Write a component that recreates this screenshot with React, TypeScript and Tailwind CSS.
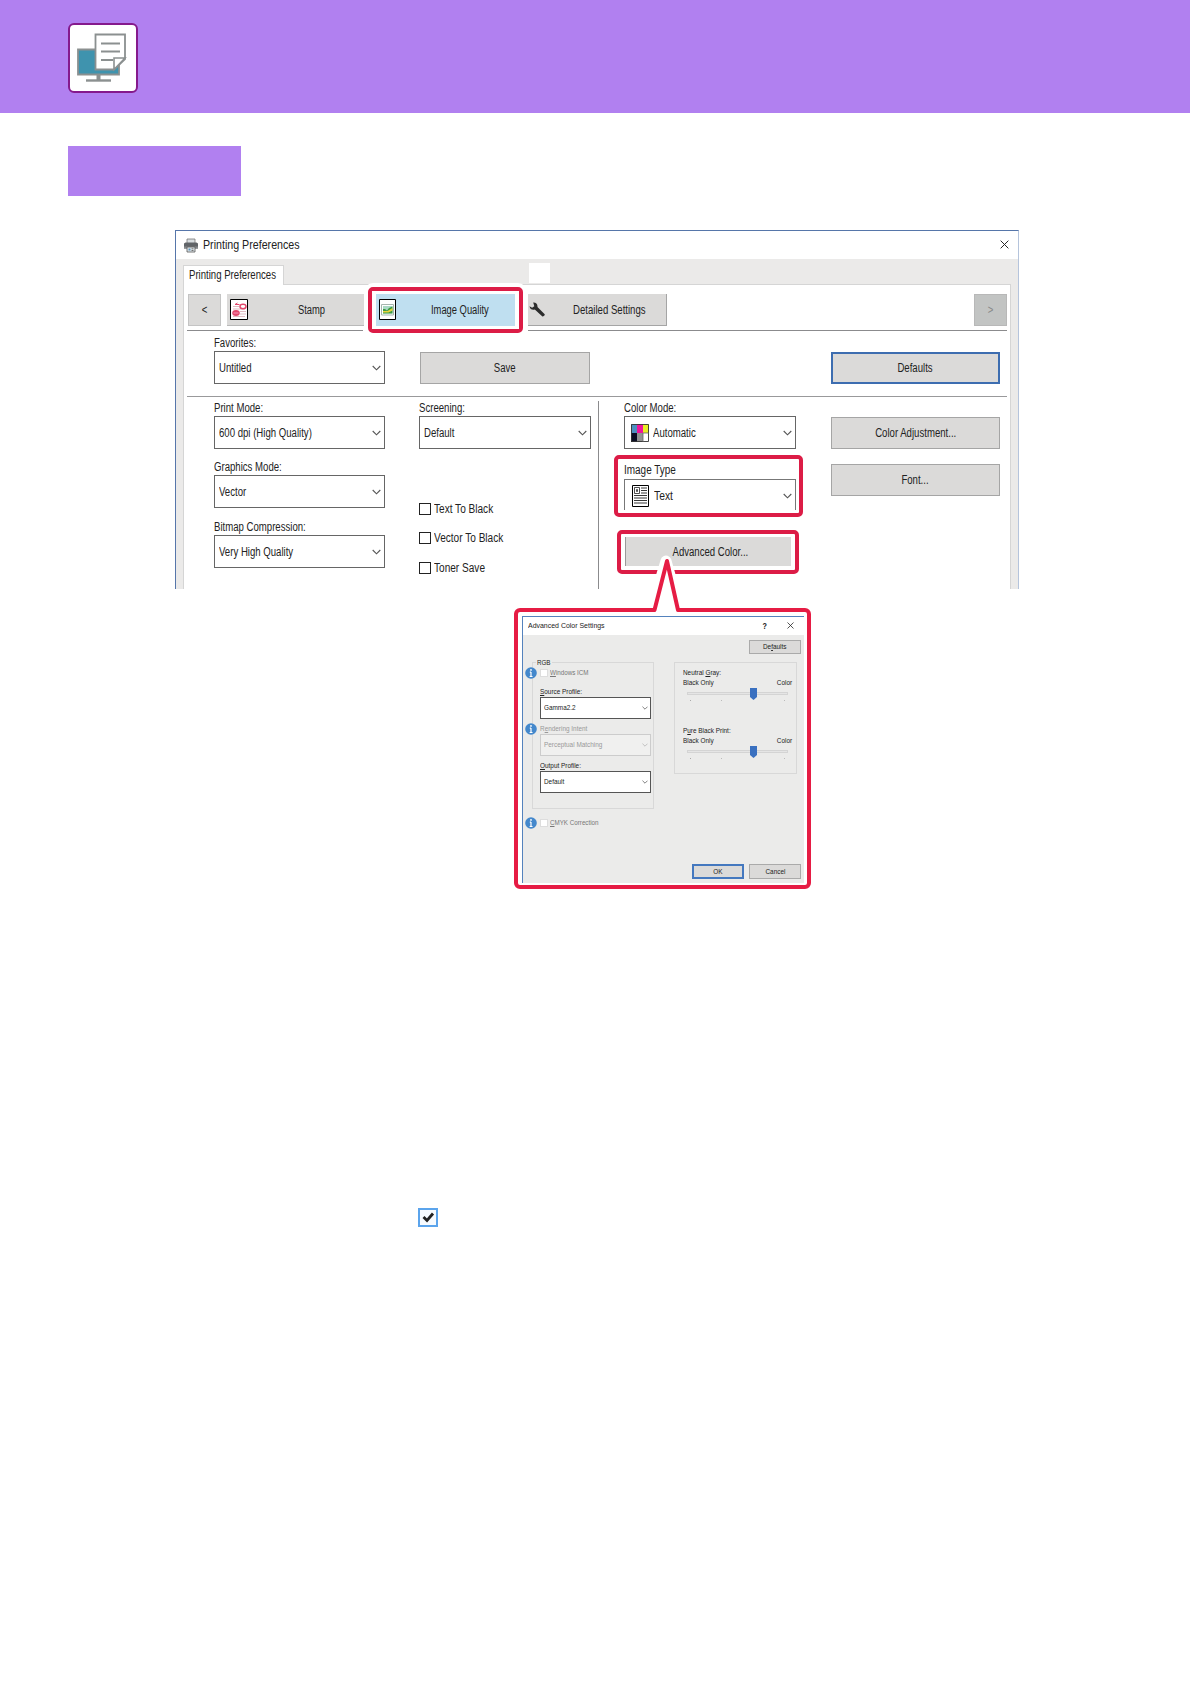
import { ReactNode } from 'react';

interface ChevronProps {
  className?: string;
}

function Chevron({ className = 'w-[9px] h-[6px]' }: ChevronProps) {
  return (
    <svg viewBox="0 0 9 6" className={className} fill="none" stroke="#555">
      <path d="M.7 1 4.5 4.8 8.3 1" strokeWidth="1.1" />
    </svg>
  );
}

interface TextProps {
  children: ReactNode;
  className?: string;
}

// condensed caption, scaled because no narrow face is available
function Text({ children, className = 'origin-left scale-x-80' }: TextProps) {
  return <span className={`inline-block ${className}`}>{children}</span>;
}

interface SelectProps {
  label: string;
  value: string;
  icon?: ReactNode;
  className?: string;
}
function Select({ label, value, icon, className = '' }: SelectProps) {
  return (
    <div className={className}>
      <div className="h-[15px] leading-[15px]">
        <Text>{label}</Text>
      </div>
      <div className="flex h-[33px] items-center border border-[#666] bg-white pr-[3px] pl-1">
        {icon && <span className="mr-1 ml-[2px]">{icon}</span>}
        <span className="flex-1">
          <Text>{value}</Text>
        </span>
        <Chevron />
      </div>
    </div>
  );
}

interface ButtonProps {
  children: ReactNode;
  fill?: string;
  className?: string;
}
function Button({ children, fill = 'bg-[#dbdad9]', className = '' }: ButtonProps) {
  return (
    <div className={`flex items-center justify-center border ${fill} ${className}`}>
      <Text className="scale-x-80">{children}</Text>
    </div>
  );
}

function CheckItem({ label, className = '' }: { label: string; className?: string }) {
  return (
    <div className={`flex h-[13px] items-center ${className}`}>
      <span className="mr-[3px] size-3 border border-[#222]" />
      <Text className="origin-left scale-x-84">{label}</Text>
    </div>
  );
}

// red marker drawn around a control, with a white halo on the outside
function Highlight({ className }: { className: string }) {
  return (
    <div
      className={`absolute rounded-[5px] border-4 border-[#dc1c46] ring-4 ring-white ${className}`}
    />
  );
}

function AppLogo() {
  return (
    <div className="flex size-[70px] items-center justify-center rounded-[6px] border-2 border-[#85198c] bg-white">
      <svg viewBox="0 0 66 66" className="size-full" stroke="#8b9090" strokeWidth="1.800">
        <path d="M8 24.500h41v25H8z" fill="#3f93ae" />
        <path d="M25.500 9.500H55V34L44 44.500H25.500z" fill="#fff" />
        <path d="M55 33H44v11.500z" fill="#fff" strokeWidth="1.600" />
        <path d="M31 18.500h19M31 26.500h19M31 35h12" />
        <path d="M28.500 50v5" strokeWidth="4" />
        <path d="M16 55.500h25" strokeWidth="2.400" />
      </svg>
    </div>
  );
}

function PrinterIcon() {
  return (
    <svg viewBox="0 0 14 14" className="h-[15px] w-[14px]">
      <path d="M3 .5h8V5H3z" fill="#d8dde0" stroke="#777" strokeWidth=".8" />
      <path d="M0 5l1.500-1h11L14 5v5H0z" fill="#606468" />
      <path d="M0 8h14v2H0z" fill="#85898c" />
      <path d="M3 8.500h8v5H3z" fill="#dfe6ea" stroke="#555" strokeWidth=".8" />
      <path d="M4.500 10h2v2h-2z" fill="#5a93b8" />
      <path d="M7.500 10.300h2M7.500 12h2" stroke="#555" strokeWidth=".8" />
    </svg>
  );
}

function StampIcon() {
  return (
    <svg viewBox="0 0 18 21" className="h-[21px] w-[18px]">
      <path d="M.5.500h17v20H.5z" fill="#fff" stroke="#000" />
      <path d="M3 7.500h6M3 10h12M10 12.500h6M10 15h6M3 17.500h12" stroke="#d9a9b2" strokeWidth=".8" />
      <ellipse cx="13" cy="7.500" rx="3" ry="2.200" fill="#fff" stroke="#e2486c" strokeWidth="1.500" />
      <path d="M7.500 4 5 5.500h4.500" stroke="#e2486c" strokeWidth="1" fill="none" />
      <ellipse cx="6" cy="14" rx="3.800" ry="3" fill="#e2486c" />
      <path d="M3.500 14h5" stroke="#fac" strokeWidth=".8" />
    </svg>
  );
}

function PictureIcon() {
  return (
    <svg viewBox="0 0 17 21" className="h-[21px] w-[17px]">
      <path d="M.5.500h16v20H.5z" fill="#fff" stroke="#000" />
      <path d="M2.500 5.500h12v10.500h-12z" fill="#fff" stroke="#a5b5ad" />
      <path d="M4 7h9.500v7.500H4z" fill="#a9d8c4" />
      <path d="M4 10h2l2 1.500 2-2.500 3.500-1.500v7H4z" fill="#3b9b42" />
      <path d="M4 12h4.500l5-3v2.500l-4 2H4z" fill="#e6d33c" />
    </svg>
  );
}

function WrenchIcon() {
  return (
    <svg viewBox="0 0 16 15" className="ml-px h-[15px] w-4" fill="#2c2c2c">
      <path d="M4.200.5C6.700.2 8.800 2 8.500 5l7.200 7.200c.5.700-1.200 2.600-2.300 2.300L5.800 7.600C3.500 8.300.8 7.300.5 4.300l2.600 1.400 2.200-1.500z" />
    </svg>
  );
}

function ColorModeIcon() {
  return (
    <svg viewBox="0 0 18 18" className="size-[18px]">
      <path d="M0 0h6v9H0z" fill="#4d8fc0" />
      <path d="M6 0h6v9H6z" fill="#f0149b" />
      <path d="M12 0h6v9h-6z" fill="#e8ed25" />
      <path d="M0 9h6v9H0z" fill="#0c0f24" />
      <path d="M6 9h6v9H6z" fill="#929292" />
      <path d="M12 9h6v9h-6z" fill="#fff" />
      <path d="M.5.500h17v17H.5z" fill="none" stroke="#333" strokeWidth=".9" />
      <path d="M12 9v9M12 9h6" stroke="#666" strokeWidth=".8" />
    </svg>
  );
}

function TextPageIcon() {
  return (
    <svg viewBox="0 0 17 22" className="h-[22px] w-[17px]" fill="none" stroke="#222">
      <path d="M.5.500h16v21H.5z" fill="#fff" stroke="#000" />
      <path d="M2.500 2.500h5v6h-5zM4.500 4.500h1v2h-1z" strokeWidth=".8" />
      <path
        d="M9 3h6M9 5.500h6M9 8h6M2 10.500h13M2 13h13M2 15.500h13M2 18h13"
        strokeWidth=".9"
      />
    </svg>
  );
}

function InfoIcon() {
  return (
    <svg viewBox="0 0 12 12" className="-ml-px size-3 shrink-0">
      <circle cx="6" cy="6" r="5.800" fill="#4488cc" />
      <path d="M6 5v4.500M4.800 5.200H6M4.600 9.500h2.900" stroke="#fff" strokeWidth="1.200" />
      <circle cx="6" cy="2.900" r=".9" fill="#fff" />
    </svg>
  );
}

function Close({ className }: { className: string }) {
  return (
    <svg viewBox="0 0 10 10" className={className} stroke="#222" strokeWidth="1.100">
      <path d="M.7.700l8.600 8.600M9.300.700.7 9.300" />
    </svg>
  );
}

function PreferencesWindow() {
  return (
    <div className="relative mt-[34px] ml-[175px] flex h-[359px] w-[844px] flex-col overflow-hidden border-x border-t border-[#5676aa] border-r-[#b5c4dc] bg-[#ebeae9] text-[12px] text-[#222]">
      <div className="flex h-7 shrink-0 items-center bg-white pr-[9px] pl-2">
        <PrinterIcon />
        <span className="ml-[5px] flex-1 text-[13px]">
          <Text className="origin-left scale-x-82">Printing Preferences</Text>
        </span>
        <Close className="mb-px size-[9px]" />
      </div>
      <div className="flex flex-1 flex-col px-[7px] pt-[6px]">
        <div className="flex h-[19px] items-start">
          <div className="relative z-10 flex h-5 w-[101px] items-center border-x border-t border-[#d5d5d5] bg-white pb-[2px] pl-[5px]">
            <Text>Printing Preferences</Text>
          </div>
          <div className="-mt-[2px] ml-[245px] h-5 w-[21px] bg-white" />
        </div>
        <div className="flex flex-1 flex-col border-x border-t border-[#d5d5d5] bg-white">
          <div className="flex h-[41px] items-end pr-[3px] pl-1">
            <Button className="h-8 w-[33px] border-[#c4c4c4]">&lt;</Button>
            <div className="ml-[6px] flex h-8 w-[137px] items-center border-b border-[#b9b9b9] bg-[#dbdad9] pl-[3px]">
              <StampIcon />
              <Text className="ml-[50px] origin-left scale-x-78">Stamp</Text>
            </div>
            <div className="relative ml-3 flex h-8 w-[139px] items-center bg-[#bfdff0] pb-px pl-[3px]">
              <PictureIcon />
              <Text className="ml-[35px] origin-left scale-x-78">Image Quality</Text>
              <Highlight className="-top-[7px] -left-2 h-[46px] w-[155px]" />
              <div className="absolute -top-[3px] -left-1 h-[38px] w-[147px] border-[3px] border-white" />
            </div>
            <div className="ml-[13px] flex h-8 w-[139px] items-center border-r border-b border-[#a5a5a5] bg-[#dbdad9]">
              <WrenchIcon />
              <Text className="ml-7 origin-left scale-x-80">Detailed Settings</Text>
            </div>
            <Button
              fill="bg-[#c2c4c3]"
              className="ml-auto h-8 w-[33px] border-[#b8b8b8] text-[#888]"
            >
              &gt;
            </Button>
          </div>
          <div className="mx-[3px] mt-1 flex h-px">
            <div className="w-[176px] bg-[#8b8b8d]" />
            <div className="ml-[165px] flex-1 bg-[#8b8b8d]" />
          </div>
          <div className="flex h-[53px] items-end pr-[10px] pl-[30px]">
            <Select label="Favorites:" value="Untitled" className="w-[171px]" />
            <Button className="ml-[35px] h-8 w-[170px] border-[#a5a5a5]">Save</Button>
            <Button className="ml-auto h-8 w-[169px] border-2 border-[#3d6db0]">
              Defaults
            </Button>
          </div>
          <div className="mx-[3px] mt-3 h-px bg-[#99999b]" />
          <div className="flex flex-1 pl-[30px]">
            <div className="w-[171px] pt-1">
              <Select label="Print Mode:" value="600 dpi (High Quality)" />
              <Select className="mt-[11px]" label="Graphics Mode:" value="Vector" />
              <Select
                className="mt-3"
                label="Bitmap Compression:"
                value="Very High Quality"
              />
            </div>
            <div className="ml-[34px] w-[172px] pt-1">
              <Select label="Screening:" value="Default" />
              <CheckItem className="mt-[53px]" label="Text To Black" />
              <CheckItem className="mt-4" label="Vector To Black" />
              <CheckItem className="mt-[17px]" label="Toner Save" />
            </div>
            <div className="mt-1 ml-[7px] w-px bg-[#8b8b8d]" />
            <div className="ml-[25px] w-[172px] pt-1">
              <Select label="Color Mode:" value="Automatic" icon={<ColorModeIcon />} />
              <div className="relative mt-[14px] h-[47px]">
                <Highlight className="-top-2 -left-[10px] h-[62px] w-[189px]" />
                <div className="relative h-4 leading-[15px]">
                  <Text className="origin-left scale-x-83">Image Type</Text>
                </div>
                <div className="relative flex h-[31px] items-center border-x border-t border-[#777] pt-px pr-[3px] pl-[7px]">
                  <TextPageIcon />
                  <span className="ml-[5px] flex-1">
                    <Text className="origin-left scale-x-86">Text</Text>
                  </span>
                  <Chevron />
                </div>
              </div>
              <div className="relative mt-[27px] ml-px">
                <Highlight className="-top-[7px] -left-2 h-[44px] w-[182px]" />
                <Button className="relative h-[29px] w-[166px] border-0 border-l border-[#999] pt-px pl-1">
                  Advanced Color...
                </Button>
              </div>
            </div>
            <div className="ml-[35px] w-[169px] pt-5">
              <Button className="h-8 border-[#a5a5a5]">Color Adjustment...</Button>
              <Button className="mt-[15px] h-8 border-[#a5a5a5]">Font...</Button>
            </div>
          </div>
        </div>
      </div>
    </div>
  );
}

interface ProfileSelectProps {
  label: ReactNode;
  value: string;
  disabled?: boolean;
}
function ProfileSelect({ label, value, disabled }: ProfileSelectProps) {
  return (
    <div className={disabled ? 'text-[#999]' : ''}>
      <div className="-ml-[14px] flex h-[11px] items-center">
        {disabled ? <InfoIcon /> : <span className="w-[11px]" />}
        <Text className="ml-[3px] origin-left scale-x-80">{label}</Text>
      </div>
      <div
        className={`flex h-[22px] w-[111px] items-center justify-between border pr-[2px] pl-[3px] ${
          disabled ? 'border-[#ccc] bg-[#f0f0ef]' : 'border-[#555] bg-white'
        }`}
      >
        <Text>{value}</Text>
        <Chevron className={disabled ? 'h-1 w-[6px] opacity-40' : 'h-1 w-[6px]'} />
      </div>
    </div>
  );
}

function Slider({ label }: { label: ReactNode }) {
  return (
    <div className="h-[58px]">
      <div className="h-[10px]">
        <Text>{label}</Text>
      </div>
      <div className="flex h-[10px] justify-between">
        <Text>Black Only</Text>
        <Text className="origin-right scale-x-80">Color</Text>
      </div>
      <div className="relative mx-1 mt-1 h-[3px] border border-[#d4d4d4] bg-[#e5e5e5]">
        <svg viewBox="0 0 7 12" className="absolute -top-[5px] left-[62px] h-3 w-[7px]">
          <path d="M0 0h7v9l-3.500 3L0 9z" fill="#3a70c0" />
        </svg>
      </div>
      <div className="mx-[7px] mt-[5px] flex h-px justify-between">
        <span className="w-px bg-[#aaa]" />
        <span className="-ml-8 w-px bg-[#bbb]" />
        <span className="w-px bg-[#bbb]" />
      </div>
    </div>
  );
}

function DisabledCheck({ children }: { children: ReactNode }) {
  return (
    <div className="-ml-[14px] flex h-3 items-center text-[#777]">
      <InfoIcon />
      <span className="mr-[2px] ml-[3px] size-2 border border-[#ddd] bg-white" />
      <Text className="origin-left scale-x-78">{children}</Text>
    </div>
  );
}

function AdvancedColorDialog() {
  return (
    <div className="absolute top-[608px] left-[514px] h-[281px] w-[297px] rounded-[6px] border-4 border-[#e61c44] bg-white p-1 pb-[2px] text-[8px] leading-[10px] text-[#222]">
      <svg viewBox="0 0 50 65" className="absolute -top-[59px] left-[123px] h-[65px] w-[50px]" fill="none">
        <path d="M11 54 25 8l13 46" stroke="#fff" strokeWidth="11" strokeLinejoin="round" />
        <path d="M12 63 25 9l13 54z" fill="#fff" />
        <path
          d="M6 57h7.500L26 8l11 49h8"
          stroke="#e61c44"
          strokeWidth="4"
          strokeLinejoin="round"
        />
      </svg>
      <div className="relative flex h-[267px] w-[282px] flex-col border-t border-l border-[#5482bd] bg-[#ebebea]">
        <div className="flex h-[18px] items-center bg-white pr-[10px] pl-[5px]">
          <span className="flex-1">
            <Text className="origin-left scale-x-87">Advanced Color Settings</Text>
          </span>
          <Text className="mr-5 scale-x-80 text-[9px] font-bold">?</Text>
          <Close className="mb-px size-[7px]" />
        </div>
        <Button className="mt-[5px] mr-[3px] h-[14px] w-[52px] self-end border-[#aaa]">
          De<u>f</u>aults
        </Button>
        <div className="mt-2 flex">
          <div className="ml-[9px] h-[147px] w-[122px] border border-[#d8d8d8] pl-[7px]">
            <div className="-mt-[5px] -ml-[4px] h-[9px] w-4 bg-[#ebebea] pl-px">
              <Text className="origin-left scale-x-78">RGB</Text>
            </div>
            <div>
              <DisabledCheck>
                <u>W</u>indows ICM
              </DisabledCheck>
            </div>
            <div className="mt-[7px]">
              <ProfileSelect label={<><u>S</u>ource Profile:</>} value="Gamma2.2" />
            </div>
            <div className="mt-1">
              <ProfileSelect
                disabled
                label={<>R<u>e</u>ndering Intent</>}
                value="Perceptual Matching"
              />
            </div>
            <div className="mt-1">
              <ProfileSelect label={<><u>O</u>utput Profile:</>} value="Default" />
            </div>
          </div>
          <div className="ml-5 h-[112px] w-[123px] border border-[#d8d8d8] pt-[5px] pr-1 pl-2">
            <Slider label={<>Neutral <u>G</u>ray:</>} />
            <Slider label={<>P<u>u</u>re Black Print:</>} />
          </div>
        </div>
        <div className="mt-2 ml-[17px]">
          <DisabledCheck>
            <u>C</u>MYK Correction
          </DisabledCheck>
        </div>
        <div className="mt-auto mr-[3px] mb-1 flex justify-end gap-[5px]">
          <Button className="h-[15px] w-[52px] border-2 border-[#4478bf]">OK</Button>
          <Button className="h-[15px] w-[52px] border-[#aaa]">Cancel</Button>
        </div>
      </div>
    </div>
  );
}

export default function App() {
  return (
    <div className="relative h-[1684px] w-[1190px] overflow-hidden bg-white font-['Liberation_Sans',sans-serif] whitespace-nowrap">
      <div className="h-[113px] bg-[#b180f0] pt-[23px] pl-[68px]">
        <AppLogo />
      </div>
      <div className="mt-[33px] ml-[68px] h-[50px] w-[173px] bg-[#b180f0]" />
      <PreferencesWindow />
      <AdvancedColorDialog />
      <div className="mt-[619px] ml-[418px] flex h-[19px] w-5 items-center justify-center border-2 border-[#5ba4ec] bg-[#f7fbff]">
        <svg viewBox="0 0 14 13" className="h-[13px] w-[14px]" fill="none" stroke="#222">
          <path d="M2.500 6 6 9.500l6-7" strokeWidth="2.800" />
        </svg>
      </div>
    </div>
  );
}
